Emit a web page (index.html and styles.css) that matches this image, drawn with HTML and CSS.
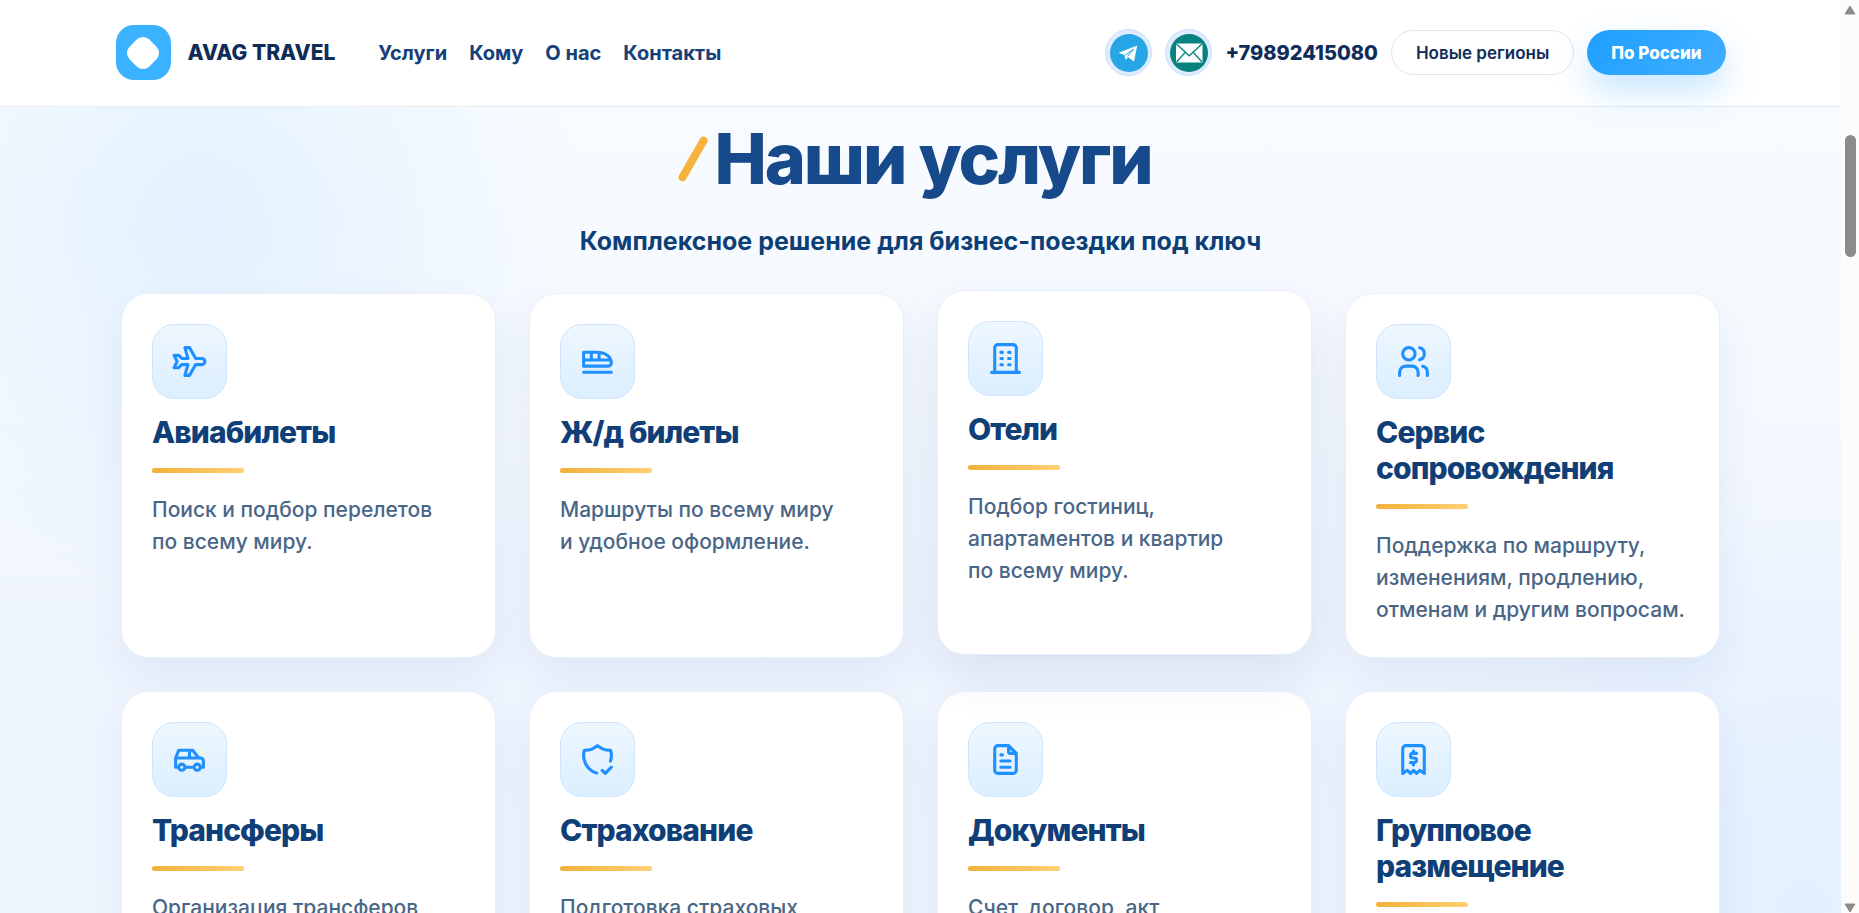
FILE: index.html
```html
<!DOCTYPE html>
<html lang="ru">

<head>
    <meta charset="UTF-8">
    <meta name="viewport" content="width=device-width, initial-scale=1.0">
    <title>AVAG TRAVEL</title>
    <link rel="stylesheet" href="styles.css">
</head>

<body>
    <div class="page">
        <header class="header">
            <div class="header-inner">
                <a href="#" class="brand">
                    <span class="brand-mark"></span>
                    <span>AVAG TRAVEL</span>
                </a>
                <nav class="nav">
                    <a href="#services">Услуги</a>
                    <a href="#clients">Кому</a>
                    <a href="#about">О нас</a>
                    <a href="#contacts">Контакты</a>
                </nav>
                <div class="actions">
                    <a href="#telegram" class="social" aria-label="Telegram">
                        <svg viewBox="0 0 38 38">
                            <circle cx="19" cy="19" r="19" fill="#27a6e5" />
                            <path d="M8.6 18.7 27.2 11.4 24 27.4 18.2 23.3 15.4 25.8 14.6 21Z" fill="#fff" />
                            <path d="M15.2 21.2 23.6 15.2 17.6 22.4" fill="none" stroke="#27a6e5" stroke-width="1" />
                        </svg>
                    </a>
                    <a href="#mail" class="social" aria-label="Почта">
                        <svg viewBox="0 0 38 38">
                            <circle cx="19" cy="19" r="19" fill="#07837f" />
                            <rect x="6" y="9.5" width="26.5" height="19" fill="#fff" />
                            <path d="M6 9.5 19.2 21.8 32.5 9.5M6.5 28 15.3 18.2M32 28 23.1 18.2" fill="none" stroke="#07837f" stroke-width="1.3" />
                        </svg>
                    </a>
                    <a href="tel:+79892415080" class="phone">+79892415080</a>
                    <button type="button" class="btn">Новые регионы</button>
                    <button type="button" class="btn btn-primary">По России</button>
                </div>
            </div>
        </header>

        <main class="services" id="services">
            <h1 class="title">Наши услуги</h1>
            <p class="subtitle">Комплексное решение для бизнес-поездки под ключ</p>

            <div class="grid">
                <article class="card">
                    <div class="icon">
                        <svg viewBox="0 0 24 24">
                            <path d="M16 10h4a2 2 0 0 1 0 4h-4l-4 7h-3l2 -7h-4l-2 2h-3l2 -4l-2 -4h3l2 2h4l-2 -7h3z" />
                        </svg>
                    </div>
                    <h2>Авиабилеты</h2>
                    <p>Поиск и подбор перелетов по&nbsp;всему миру.</p>
                </article>

                <article class="card">
                    <div class="icon">
                        <svg viewBox="0 0 24 24">
                            <path d="M21 13c0 -3.87 -3.37 -7 -10 -7h-8M3 15h16a2 2 0 0 0 2 -2M3 6v5h17.5M3 11v4M8 11v-5M13 11v-4.5M3 19h18" />
                        </svg>
                    </div>
                    <h2>Ж/д билеты</h2>
                    <p>Маршруты по всему миру и&nbsp;удобное оформление.</p>
                </article>

                <article class="card active">
                    <div class="icon">
                        <svg viewBox="0 0 24 24">
                            <path d="M3 21h18M9 8h1M9 12h1M9 16h1M14 8h1M14 12h1M14 16h1M5 21v-16a2 2 0 0 1 2 -2h10a2 2 0 0 1 2 2v16" />
                        </svg>
                    </div>
                    <h2>Отели</h2>
                    <p>Подбор гостиниц, апартаментов и квартир по&nbsp;всему миру.</p>
                </article>

                <article class="card">
                    <div class="icon">
                        <svg viewBox="0 0 24 24">
                            <path d="M5 7a4 4 0 1 0 8 0a4 4 0 1 0 -8 0M3 21v-2a4 4 0 0 1 4 -4h4a4 4 0 0 1 4 4v2M16 3.13a4 4 0 0 1 0 7.75M21 21v-2a4 4 0 0 0 -3 -3.85" />
                        </svg>
                    </div>
                    <h2>Сервис сопровождения</h2>
                    <p>Поддержка по маршруту, изменениям, продлению, отменам и другим вопросам.</p>
                </article>

                <article class="card">
                    <div class="icon">
                        <svg viewBox="0 0 24 24">
                            <path d="M5 17a2 2 0 1 0 4 0a2 2 0 1 0 -4 0M15 17a2 2 0 1 0 4 0a2 2 0 1 0 -4 0M5 17h-2v-6l2 -5h9l4 5h1a2 2 0 0 1 2 2v4h-2m-4 0h-6m-6 -6h15m-6 0v-5" />
                        </svg>
                    </div>
                    <h2>Трансферы</h2>
                    <p>Организация трансферов</p>
                </article>

                <article class="card">
                    <div class="icon">
                        <svg viewBox="0 0 24 24">
                            <path d="M11.46 20.846a12 12 0 0 1 -7.96 -14.846a12 12 0 0 0 8.5 -3a12 12 0 0 0 8.5 3a12 12 0 0 1 -.09 7.06M15 19l2 2l4 -4" />
                        </svg>
                    </div>
                    <h2>Страхование</h2>
                    <p>Подготовка страховых</p>
                </article>

                <article class="card">
                    <div class="icon">
                        <svg viewBox="0 0 24 24">
                            <path d="M14 3v4a1 1 0 0 0 1 1h4M17 21h-10a2 2 0 0 1 -2 -2v-14a2 2 0 0 1 2 -2h7l5 5v11a2 2 0 0 1 -2 2zM9 9h1M9 13h6M9 17h6" />
                        </svg>
                    </div>
                    <h2>Документы</h2>
                    <p>Счет, договор, акт</p>
                </article>

                <article class="card">
                    <div class="icon">
                        <svg viewBox="0 0 24 24">
                            <path d="M5 21v-16a2 2 0 0 1 2 -2h10a2 2 0 0 1 2 2v16l-3 -2l-2 2l-2 -2l-2 2l-2 -2l-3 2M14 8h-2.5a1.5 1.5 0 0 0 0 3h1a1.5 1.5 0 0 1 0 3h-2.5m2 0v1.5m0 -9v1.5" />
                        </svg>
                    </div>
                    <h2>Групповое размещение</h2>
                </article>
            </div>
        </main>
    </div>

    <div class="scrollbar" aria-hidden="true">
        <svg class="arrow" viewBox="0 0 12 10"><path d="M6 1 11 9H1Z" /></svg>
        <span class="thumb"></span>
        <svg class="arrow" viewBox="0 0 12 10"><path d="M6 9 1 1H11Z" /></svg>
    </div>
</body>

</html>
```
FILE: styles.css
```css
* {
    box-sizing: border-box;
}

body {
    margin: 0;
    display: flex;
    height: 100vh;
    overflow: hidden;
    font-family: Inter, "Liberation Sans", sans-serif;
    color: #0f2c59;
}

a {
    color: inherit;
    text-decoration: none;
}

h1,
h2,
p {
    margin: 0;
}

.page {
    flex: 1;
    overflow: hidden;
    background:
        radial-gradient(circle at 11% 24%, rgba(214, 236, 255, 0.6), transparent 380px),
        radial-gradient(circle at 98% 100%, rgba(214, 234, 255, 0.5), transparent 440px),
        linear-gradient(180deg, #f8fcff 0%, #f6faff 35%, #eff5ff 70%, #eff6ff 100%);
}

/* шапка */
.header {
    position: relative;
    z-index: 2;
    background: #fff;
    border-bottom: 1px solid #e6ebf2;
}

.header-inner {
    display: flex;
    align-items: center;
    max-width: 1610px;
    margin: 0 auto;
    padding: 25px 0 26px;
}

.brand {
    display: flex;
    align-items: center;
    gap: 17px;
    font-size: 21px;
    font-weight: 800;
}

.brand-mark {
    display: grid;
    place-items: center;
    width: 55px;
    height: 55px;
    border-radius: 18px;
    background: #3bb2ff;
}

.brand-mark::before {
    content: "";
    width: 28px;
    height: 28px;
    border-radius: 9px;
    background: #fff;
    transform: rotate(45deg);
}

.nav {
    display: flex;
    gap: 22px;
    margin-left: 43px;
    font-size: 20px;
    font-weight: 700;
    color: #164079;
}

.actions {
    display: flex;
    align-items: center;
    gap: 13px;
    margin-left: auto;
}

.social {
    display: grid;
    place-items: center;
    width: 47px;
    height: 47px;
    border: 1px solid #c5e1fd;
    border-radius: 50%;
    background: #dfecfd;
}

.social svg {
    width: 38px;
    height: 38px;
}

.phone {
    font-size: 20px;
    font-weight: 800;
}

.btn {
    height: 45px;
    padding: 0 24px;
    border: 1px solid #dfe4ee;
    border-radius: 23px;
    background: #fff;
    color: #0f2c59;
    font-family: inherit;
    font-size: 17px;
    font-weight: 600;
    cursor: pointer;
}

.btn-primary {
    border: 0;
    background: linear-gradient(135deg, #1e9fff, #40aeff);
    box-shadow: 0 16px 34px rgba(30, 159, 255, 0.25);
    color: #fff;
    font-weight: 800;
}

/* услуги */
.services {
    max-width: 1599px;
    margin: 0 auto;
    padding-top: 17px;
}

.title {
    display: flex;
    align-items: center;
    justify-content: center;
    gap: 17px;
    font-size: 70px;
    line-height: 70px;
    font-weight: 800;
    letter-spacing: -0.03em;
    color: #164a8b;
}

.title::before {
    content: "";
    width: 8px;
    height: 50px;
    border-radius: 4px;
    background: #f5b33c;
    transform: rotate(30deg);
}

.subtitle {
    margin: 32px 0 37px;
    text-align: center;
    font-size: 25px;
    line-height: 30px;
    font-weight: 700;
    color: #0d3f76;
}

.grid {
    display: grid;
    grid-template-columns: repeat(4, 1fr);
    gap: 33px;
}

.card {
    padding: 30px 30px 31px;
    border: 1px solid #e9f0f8;
    border-radius: 28px;
    background: #fff;
    box-shadow: 0 18px 44px rgba(20, 60, 120, 0.07);
}

.card.active {
    transform: translateY(-3px);
    box-shadow: 0 20px 48px rgba(20, 60, 120, 0.1);
}

.icon {
    display: grid;
    place-items: center;
    width: 75px;
    height: 75px;
    margin-bottom: 15px;
    border: 1px solid #cde5fe;
    border-radius: 22px;
    background: linear-gradient(180deg, #eef7ff, #dceeff);
}

.icon svg {
    width: 37px;
    height: 37px;
    fill: none;
    stroke: #1e90ff;
    stroke-width: 2;
    stroke-linecap: round;
    stroke-linejoin: round;
}

.card h2 {
    font-size: 30px;
    line-height: 36px;
    font-weight: 800;
    letter-spacing: -0.03em;
    color: #103f78;
}

.card h2::after {
    content: "";
    display: block;
    width: 92px;
    height: 5px;
    margin: 18px 0 21px;
    border-radius: 3px;
    background: linear-gradient(90deg, #f2b13a, #ffd074);
}

.card p {
    font-size: 21px;
    line-height: 32px;
    font-weight: 500;
    color: #4a6687;
}

/* полоса прокрутки */
.scrollbar {
    display: flex;
    flex-direction: column;
    align-items: center;
    justify-content: space-between;
    width: 18px;
    padding-top: 5px;
    background: #fcfcfc;
}

.arrow {
    width: 12px;
    height: 10px;
    fill: #8b8b8b;
    stroke: #8b8b8b;
    stroke-linejoin: round;
}

.thumb {
    width: 11px;
    height: 122px;
    margin: 120px 0 auto;
    border-radius: 6px;
    background: #8b8b8b;
}
```
